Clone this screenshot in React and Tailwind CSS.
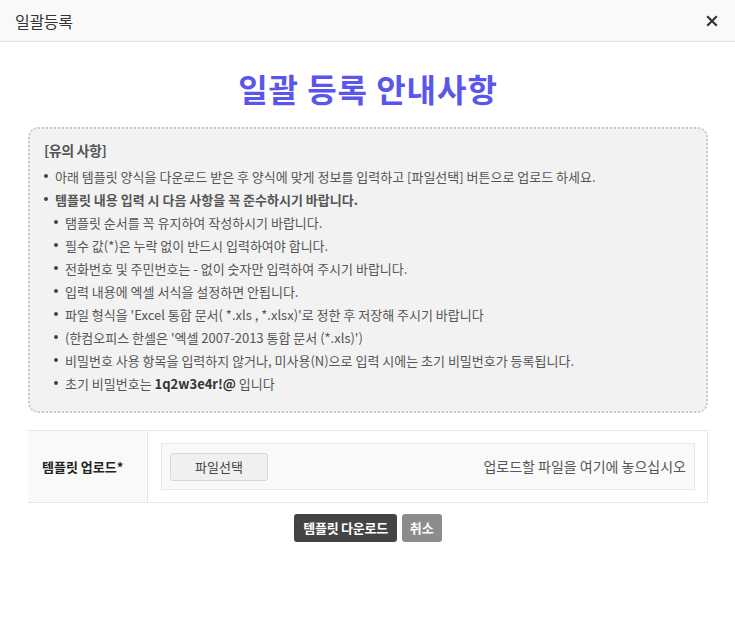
import React from 'react';

const font = { fontFamily: '"Noto Sans CJK KR", "Noto Sans", sans-serif' };

const NOTES = [
  { text: '탬플릿 순서를 꼭 유지하여 작성하시기 바랍니다.' },
  { text: '필수 값(*)은 누락 없이 반드시 입력하여야 합니다.' },
  { text: '전화번호 및 주민번호는 - 없이 숫자만 입력하여 주시기 바랍니다.' },
  { text: '입력 내용에 엑셀 서식을 설정하면 안됩니다.' },
  { text: "파일 형식을 'Excel 통합 문서( *.xls , *.xlsx)'로 정한 후 저장해 주시기 바랍니다" },
  { text: "(한컴오피스 한셀은 '엑셀 2007-2013 통합 문서 (*.xls)')" },
  { text: '비밀번호 사용 항목을 입력하지 않거나, 미사용(N)으로 입력 시에는 초기 비밀번호가 등록됩니다.' },
];

const Dot = () => <span className="mt-[9px] mr-[7px] h-[4px] w-[4px] shrink-0 rounded-full bg-[#444]" />;

export default function App() {
  return (
    <div className="min-h-screen w-[735px] bg-white text-[#555]" style={font}>
      <div className="flex h-[42px] items-center justify-between border-b border-[#e2e2e2] bg-[#f9f9f9] pl-[15px] pr-[17px]">
        <span className="text-[16px] tracking-[-0.02em] text-[#333]">일괄등록</span>
        <svg width="12" height="12" viewBox="0 0 12 12" className="text-[#333]">
          <path d="M2 2 L10 10 M10 2 L2 10" stroke="currentColor" strokeWidth="2.2" strokeLinecap="square" />
        </svg>
      </div>

      <div className="pl-[28px] pr-[27px]">
        <h1 className="mt-[23px] text-center text-[32px] font-bold leading-[46px] tracking-[0.03em] text-[#5a55ec]">일괄 등록 안내사항</h1>

        <div className="mt-[16px] rounded-[10px] border-2 border-dotted border-[#cacaca] bg-[#f2f2f2] px-[14px] pt-[10px] pb-[16px] text-[13px] leading-[23px]">
          <div className="text-[14px] font-bold tracking-[-0.03em] text-[#555]">[유의 사항]</div>
          <div className="mt-[3px] flex"><Dot />아래 템플릿 양식을 다운로드 받은 후 양식에 맞게 정보를 입력하고 [파일선택] 버튼으로 업로드 하세요.</div>
          <div className="flex font-bold"><Dot />템플릿 내용 입력 시 다음 사항을 꼭 준수하시기 바랍니다.</div>
          <div className="pl-[10px]">
            {NOTES.map((n) => (
              <div key={n.text} className="flex"><Dot />{n.text}</div>
            ))}
            <div className="flex"><Dot />초기 비밀번호는&nbsp;<b className="text-[#333]">1q2w3e4r!@</b>&nbsp;입니다</div>
          </div>
        </div>

        <div className="mt-[17px] flex h-[73px] border-y border-[#e6e6e6]">
          <div className="flex w-[120px] items-center border-r border-[#e6e6e6] bg-[#f9f9f9] pl-[14px] text-[13px] font-bold text-[#222]">템플릿 업로드*</div>
          <div className="flex flex-1 items-center border-r border-[#e6e6e6] pl-[13px] pr-[12px]">
            <div className="flex h-[47px] flex-1 items-center justify-between border border-[#e8e8e8] bg-[#f9f9f9] pl-[8px] pr-[8px]">
              <button className="h-[28px] w-[98px] rounded-[3px] border border-[#d8d8d8] bg-[#f0f0f0] text-[13px] text-[#444]">파일선택</button>
              <span className="text-[14px] text-[#555]">업로드할 파일을 여기에 놓으십시오</span>
            </div>
          </div>
        </div>

        <div className="mt-[11px] flex justify-center gap-[5px]">
          <button className="h-[28px] rounded-[3px] bg-[#444] px-[9px] text-[13px] font-bold tracking-[-0.02em] text-white">템플릿 다운로드</button>
          <button className="h-[28px] rounded-[3px] bg-[#8c8c8c] px-[8px] text-[13px] font-bold text-white">취소</button>
        </div>
      </div>
    </div>
  );
}
